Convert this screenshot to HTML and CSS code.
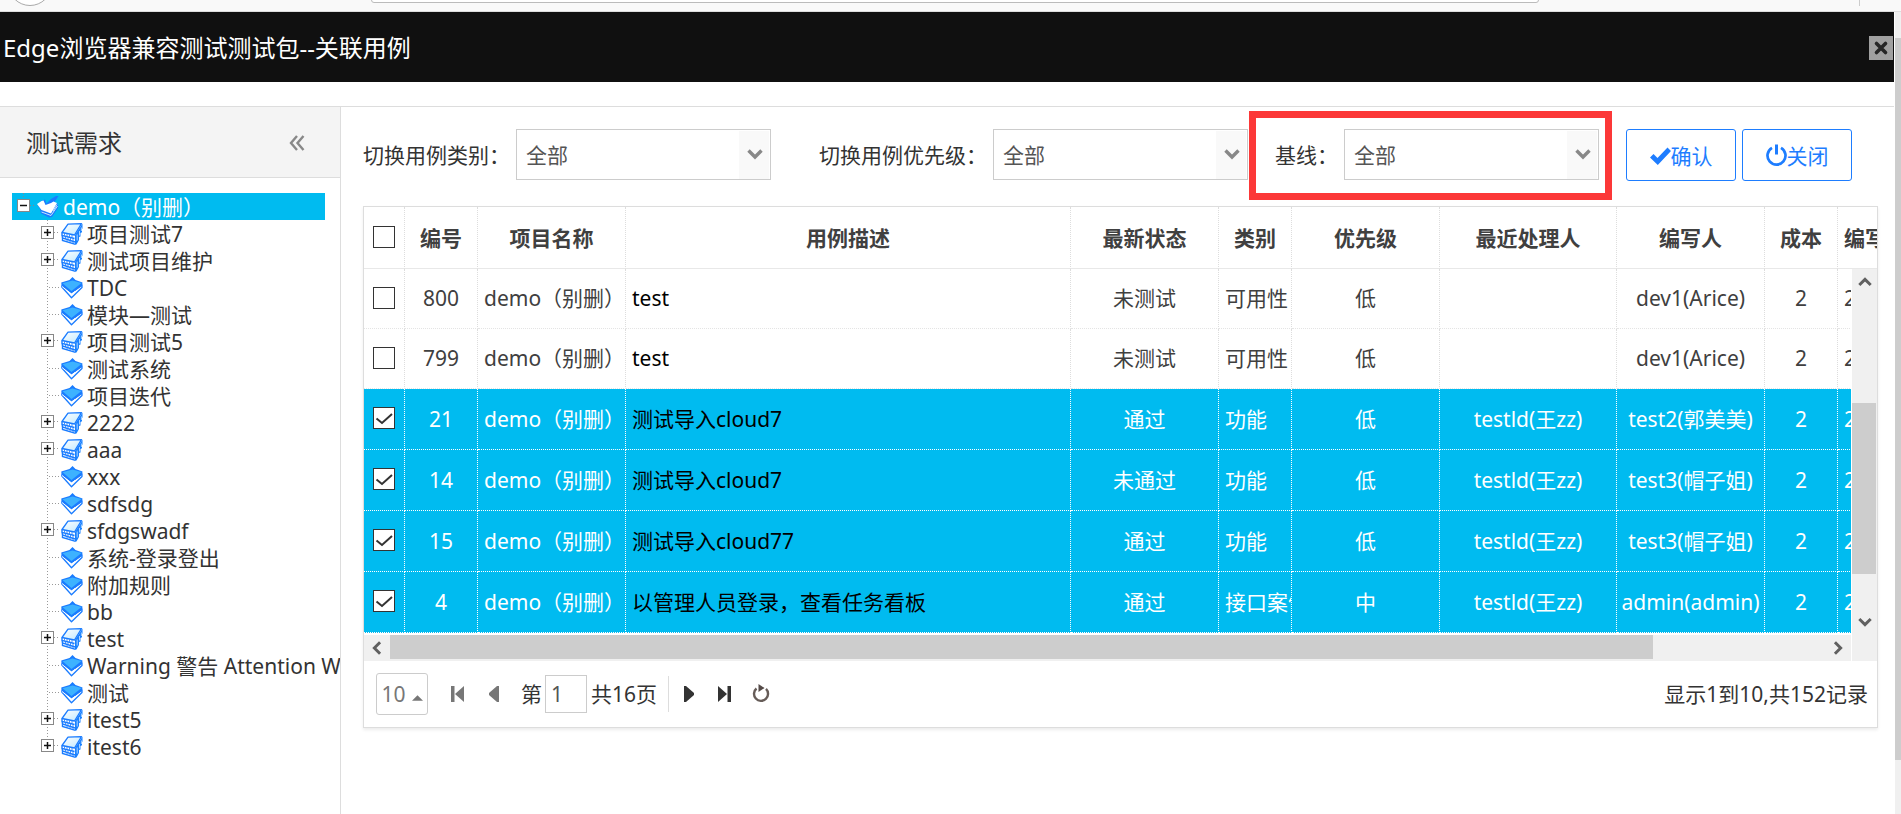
FILE: index.html
```html
<!DOCTYPE html>
<html lang="zh-CN">
<head>
<meta charset="utf-8">
<title>关联用例</title>
<link rel="stylesheet" href="styles.css">
</head>
<body>
<svg class="defs" aria-hidden="true">
  <defs>
    <linearGradient id="face" x1="0" y1="0" x2="1" y2="1"><stop offset="0" stop-color="#fff"/><stop offset="1" stop-color="#bfe9ff"/></linearGradient>
    <symbol id="stack" viewBox="0 0 22 22">
      <path d="M1 9.500 7 1.500 21 .5V7L15 21.500 1.500 17z" fill="#fff"/>
      <path d="M21.500.5 14 12v9.500h1.500L18 17v-3l1.500-.5V10l1.500-.8V6l.5-.5z" fill="#1a82ff"/>
      <path d="M16.200 11.500v6M18.500 8v4.500M20.400 4.500V8" stroke="#cfe8ff" stroke-width=".8"/>
      <path d="M1 9.500 7 1.200 20.500.7 13.500 12z" fill="url(#face)" stroke="#1a7cff" stroke-width="1.300" stroke-linejoin="round"/>
      <path d="M1 9.500v3L13.500 15.500M1 12.500l.5 2.500 12.500 4M1.500 15.500v2L14.500 21.300" fill="none" stroke="#1a7cff" stroke-width="1.400"/>
      <path d="M3.500 10.200v2.500M6 10.800v2.500M8.500 11.400v2.500M11 12v2.500M4.500 13.500v2.500M7 14.200v2.500M9.500 15v2.500M12 15.500V18M6 16.700v2M9 17.600v2M12 18.500v2" stroke="#1a7cff" stroke-width=".8"/>
    </symbol>
    <symbol id="open" viewBox="0 0 22 22">
      <path d="M4 5 8 3.500l1.500 4L14 3l5-3h2.500L17.500 6l3.500 2v4l-6 9-3 .5L4 17.500 3 13 .5 9z" fill="#1a7cff"/>
      <path d="M0 8 4.500 5l2-.5L8.500 9 14 7l2.500-1.500L20 7l-6 10.500L4.500 14z" fill="#fff"/>
      <path d="M4.500 16 14 19.500 20.500 10M16 15l4-6.500" fill="none" stroke="#d9eeff" stroke-width=".9"/>
    </symbol>
    <symbol id="leaf" viewBox="0 0 22 22">
      <path d="M1 9 10.500 15.500 21 8v2.500L10.500 20.800.8 10z" fill="#fff" stroke="#1a7cff" stroke-width="1.300" stroke-linejoin="round"/>
      <path d="M.3 5.500 8.500 3 11.500 0l3 3 7 2.500-.5 3.500L10.500 16.500.5 9z" fill="#1a7cff"/>
      <path d="M1.500 6.200 11.500 3.500 20.500 6 10.500 14z" fill="#3db2ff"/>
      <path d="M1 9.500 10.500 17 14 14.500" fill="none" stroke="#fff" stroke-width="1"/>
    </symbol>
    <symbol id="plus" viewBox="0 0 24 27">
      <path d="M11.500 0v27" stroke="#999" stroke-dasharray="1 2"/><path d="M18 12.500h6" stroke="#999" stroke-dasharray="1 2"/>
      <rect x="5.500" y="6.500" width="12" height="12" fill="#fff" stroke="#888"/>
      <path d="M8 12.500h7M11.500 9v7" stroke="#111" stroke-width="1.500"/>
    </symbol>
    <symbol id="plus-end" viewBox="0 0 24 27">
      <path d="M11.500 0v6" stroke="#999" stroke-dasharray="1 2"/><path d="M18 12.500h6" stroke="#999" stroke-dasharray="1 2"/>
      <rect x="5.500" y="6.500" width="12" height="12" fill="#fff" stroke="#888"/>
      <path d="M8 12.500h7M11.500 9v7" stroke="#111" stroke-width="1.500"/>
    </symbol>
    <symbol id="minus" viewBox="0 0 24 27">
      <path d="M11.500 0v6" stroke="#888" stroke-dasharray="1 2"/><path d="M18 12.500h6" stroke="#888" stroke-dasharray="1 2"/>
      <rect x="5.500" y="6.500" width="12" height="12" fill="#fff" stroke="#888"/>
      <path d="M8 12.500h7" stroke="#111" stroke-width="1.500"/>
    </symbol>
    <symbol id="join" viewBox="0 0 24 27"><path d="M11.500 0v27M13 13.500h11" stroke="#999" stroke-dasharray="1 2"/></symbol>
    <symbol id="chev" viewBox="0 0 16 16"><path d="M1.500 4.500 8 11l6.500-6.500" fill="none" stroke="currentColor" stroke-width="3.400"/></symbol>
  </defs>
</svg>

<div class="chrome"><span class="chrome-circle"></span><span class="chrome-url"></span><span class="chrome-sep"></span></div>

<div class="page">
  <div class="window">
    <header class="titlebar">
      <h1>Edge浏览器兼容测试测试包--关联用例</h1>
      <button class="close" aria-label="关闭窗口"><svg viewBox="0 0 24 24"><path d="M7.500 7.500l9 9M16.500 7.500l-9 9" stroke="#262626" stroke-width="3.600" stroke-linecap="round"/></svg></button>
    </header>
    <div class="layout">
      <aside class="sidebar">
        <div class="side-head">
          <h2>测试需求</h2>
          <button class="collapse" aria-label="折叠"><svg viewBox="0 0 16 16"><path d="M8 1 2 8l6 7M14.500 1l-6 7 6 7" fill="none" stroke="#888" stroke-width="2.400"/></svg></button>
        </div>
        <ul class="tree">
          <li>
            <div class="node selected"><svg class="hit"><use href="#minus"/></svg><svg class="ico"><use href="#open"/></svg><span>demo（别删）</span></div>
            <ul>
              <li class="node"><svg class="hit"><use href="#plus"/></svg><svg class="ico"><use href="#stack"/></svg><span>项目测试7</span></li>
              <li class="node"><svg class="hit"><use href="#plus"/></svg><svg class="ico"><use href="#stack"/></svg><span>测试项目维护</span></li>
              <li class="node"><svg class="hit"><use href="#join"/></svg><svg class="ico"><use href="#leaf"/></svg><span>TDC</span></li>
              <li class="node"><svg class="hit"><use href="#join"/></svg><svg class="ico"><use href="#leaf"/></svg><span>模块—测试</span></li>
              <li class="node"><svg class="hit"><use href="#plus"/></svg><svg class="ico"><use href="#stack"/></svg><span>项目测试5</span></li>
              <li class="node"><svg class="hit"><use href="#join"/></svg><svg class="ico"><use href="#leaf"/></svg><span>测试系统</span></li>
              <li class="node"><svg class="hit"><use href="#join"/></svg><svg class="ico"><use href="#leaf"/></svg><span>项目迭代</span></li>
              <li class="node"><svg class="hit"><use href="#plus"/></svg><svg class="ico"><use href="#stack"/></svg><span>2222</span></li>
              <li class="node"><svg class="hit"><use href="#plus"/></svg><svg class="ico"><use href="#stack"/></svg><span>aaa</span></li>
              <li class="node"><svg class="hit"><use href="#join"/></svg><svg class="ico"><use href="#leaf"/></svg><span>xxx</span></li>
              <li class="node"><svg class="hit"><use href="#join"/></svg><svg class="ico"><use href="#leaf"/></svg><span>sdfsdg</span></li>
              <li class="node"><svg class="hit"><use href="#plus"/></svg><svg class="ico"><use href="#stack"/></svg><span>sfdgswadf</span></li>
              <li class="node"><svg class="hit"><use href="#join"/></svg><svg class="ico"><use href="#leaf"/></svg><span>系统-登录登出</span></li>
              <li class="node"><svg class="hit"><use href="#join"/></svg><svg class="ico"><use href="#leaf"/></svg><span>附加规则</span></li>
              <li class="node"><svg class="hit"><use href="#join"/></svg><svg class="ico"><use href="#leaf"/></svg><span>bb</span></li>
              <li class="node"><svg class="hit"><use href="#plus"/></svg><svg class="ico"><use href="#stack"/></svg><span>test</span></li>
              <li class="node"><svg class="hit"><use href="#join"/></svg><svg class="ico"><use href="#leaf"/></svg><span>Warning 警告 Attention W</span></li>
              <li class="node"><svg class="hit"><use href="#join"/></svg><svg class="ico"><use href="#leaf"/></svg><span>测试</span></li>
              <li class="node"><svg class="hit"><use href="#plus"/></svg><svg class="ico"><use href="#stack"/></svg><span>itest5</span></li>
              <li class="node"><svg class="hit"><use href="#plus-end"/></svg><svg class="ico"><use href="#stack"/></svg><span>itest6</span></li>
            </ul>
          </li>
        </ul>
      </aside>

      <main class="content">
        <div class="filters">
          <div class="field field-type"><label for="type">切换用例类别：</label><div class="combo"><select id="type"><option>全部</option></select><svg><use href="#chev"/></svg></div></div>
          <div class="field field-level"><label for="level">切换用例优先级：</label><div class="combo"><select id="level"><option>全部</option></select><svg><use href="#chev"/></svg></div></div>
          <div class="field field-base"><label for="base">基线：</label><div class="combo"><select id="base"><option>全部</option></select><svg><use href="#chev"/></svg></div></div>
          <div class="actions">
            <button class="btn"><svg viewBox="0 0 21 21"><path d="M0 11.500 3.500 8l4 4L17.500 1.500 21 5 7.800 19z" fill="currentColor"/></svg>确认</button>
            <button class="btn"><svg viewBox="0 0 21 21"><path d="M6 1.800A9 9 0 1 0 15 1.800" fill="none" stroke="currentColor" stroke-width="2.700"/><path d="M10.500-1.500v10" stroke="currentColor" stroke-width="3"/></svg>关闭</button>
          </div>
        </div>

        <section class="grid">
          <div class="grid-view">
            <table>
              <colgroup><col class="w-check"><col class="w-s"><col class="w-m"><col><col class="w-m"><col class="w-s"><col class="w-m"><col class="w-l"><col class="w-m"><col class="w-s"><col class="w-m"></colgroup>
              <thead>
                <tr><th class="pick"><input type="checkbox" aria-label="全选"></th><th>编号</th><th>项目名称</th><th>用例描述</th><th>最新状态</th><th>类别</th><th>优先级</th><th>最近处理人</th><th>编写人</th><th>成本</th><th class="left">编写日期</th></tr>
              </thead>
              <tbody>
                <tr><td class="pick"><input type="checkbox" aria-label="800"></td><td>800</td><td class="left">demo（别删）</td><td class="desc">test</td><td>未测试</td><td class="left">可用性</td><td>低</td><td></td><td>dev1(Arice)</td><td>2</td><td class="left">2019</td></tr>
                <tr><td class="pick"><input type="checkbox" aria-label="799"></td><td>799</td><td class="left">demo（别删）</td><td class="desc">test</td><td>未测试</td><td class="left">可用性</td><td>低</td><td></td><td>dev1(Arice)</td><td>2</td><td class="left">2019</td></tr>
                <tr class="on"><td class="pick"><input type="checkbox" checked aria-label="21"></td><td>21</td><td class="left">demo（别删）</td><td class="desc">测试导入cloud7</td><td>通过</td><td class="left">功能</td><td>低</td><td>testld(王zz)</td><td>test2(郭美美)</td><td>2</td><td class="left">2019</td></tr>
                <tr class="on"><td class="pick"><input type="checkbox" checked aria-label="14"></td><td>14</td><td class="left">demo（别删）</td><td class="desc">测试导入cloud7</td><td>未通过</td><td class="left">功能</td><td>低</td><td>testld(王zz)</td><td>test3(帽子姐)</td><td>2</td><td class="left">2019</td></tr>
                <tr class="on"><td class="pick"><input type="checkbox" checked aria-label="15"></td><td>15</td><td class="left">demo（别删）</td><td class="desc">测试导入cloud77</td><td>通过</td><td class="left">功能</td><td>低</td><td>testld(王zz)</td><td>test3(帽子姐)</td><td>2</td><td class="left">2019</td></tr>
                <tr class="on"><td class="pick"><input type="checkbox" checked aria-label="4"></td><td>4</td><td class="left">demo（别删）</td><td class="desc">以管理人员登录，查看任务看板</td><td>通过</td><td class="left">接口案例</td><td>中</td><td>testld(王zz)</td><td>admin(admin)</td><td>2</td><td class="left">2019</td></tr>
              </tbody>
            </table>
            <div class="hscroll"><svg class="arrow to-left"><use href="#chev"/></svg><div class="htrack"><div class="hthumb"></div></div><svg class="arrow to-right"><use href="#chev"/></svg></div>
            <div class="vscroll"><svg class="arrow to-up"><use href="#chev"/></svg><div class="vtrack"><div class="vthumb"></div></div><svg class="arrow"><use href="#chev"/></svg></div>
          </div>
          <footer class="pager">
            <button class="size">10<svg viewBox="0 0 12 6"><path d="M0 6 6 0l6 6z" fill="#777"/></svg></button>
            <button class="nav dim" aria-label="首页"><svg viewBox="0 0 16 16"><path d="M1 0h3.500v16H1zM14 0v16L5 8z" fill="currentColor"/></svg></button>
            <button class="nav dim" aria-label="上一页"><svg viewBox="0 0 16 16"><path d="M13 0v16h-2L3 9V7l8-7z" fill="currentColor"/></svg></button>
            <div class="goto"><label for="pg">第</label><input id="pg" type="text" value="1"><span>共16页</span></div>
            <button class="nav" aria-label="下一页"><svg viewBox="0 0 16 16"><path d="M3 0v16h2l8-7V7L5 0z" fill="currentColor"/></svg></button>
            <button class="nav" aria-label="末页"><svg viewBox="0 0 16 16"><path d="M14 0h-3.500v16H14zM1 0v16l9-8z" fill="currentColor"/></svg></button>
            <button class="nav" aria-label="刷新"><svg viewBox="0 0 16 16"><path d="M3.500 2.500a7 7 0 1 0 9.500.4" fill="none" stroke="#665c58" stroke-width="2.400"/><path d="M5.500-2v8l6-4z" fill="#554b48"/></svg></button>
            <span class="total">显示1到10,共152记录</span>
          </footer>
        </section>
      </main>
    </div>
  </div>
  <div class="page-scroll"><div class="page-thumb"></div></div>
</div>
</body>
</html>
```

FILE: styles.css
```css
* { box-sizing: border-box; }

body {
  margin: 0;
  height: 100vh;
  display: flex;
  flex-direction: column;
  overflow: hidden;
  background: #fff;
  color: #333;
  font: 21px/27px "Noto Sans", "Noto Sans CJK SC", sans-serif;
}

h1, h2 { margin: 0; font-weight: 400; }
ul { margin: 0; padding: 0; list-style: none; }
button, input, select { font: inherit; color: inherit; }
button { padding: 0; border: 0; background: none; }
.defs { position: absolute; width: 0; height: 0; }

/* browser toolbar edge */
.chrome {
  position: relative;
  flex: none;
  height: 12px;
  overflow: hidden;
  background: #f9f9f9;
  border-bottom: 1px solid #ddd;
}
.chrome-circle {
  position: absolute;
  left: 8px;
  bottom: 5px;
  width: 44px;
  height: 44px;
  border: 1px solid #aaa;
  border-radius: 50%;
  background: #fff;
}
.chrome-url {
  position: absolute;
  left: 371px;
  right: 362px;
  bottom: 8px;
  height: 20px;
  border: 1px solid #bbb;
  border-radius: 3px;
  background: #fff;
}
.chrome-sep {
  position: absolute;
  right: 41px;
  top: 0;
  width: 1px;
  height: 6px;
  background: #ccc;
}

.page { flex: 1; min-height: 0; display: flex; }
.window { flex: 1; min-width: 0; display: flex; flex-direction: column; }
.page-scroll { flex: none; width: 7px; padding-top: 26px; background: #f0f0f0; border-left: 1px solid #fff; }
.page-thumb { height: 93%; background: #cdcdcd; }

.titlebar {
  flex: none;
  height: 70px;
  padding: 2px 1px 0 3px;
  display: flex;
  align-items: center;
  justify-content: space-between;
  background: #101010;
  color: #fff;
}
.titlebar h1 { font-size: 24px; line-height: 32px; }
.close { width: 24px; height: 24px; background: #a0a0a0; }
.close svg { display: block; width: 24px; height: 24px; }

.layout {
  flex: 1;
  min-height: 0;
  display: flex;
  margin-top: 24px;
  border-top: 1px solid #ddd;
}

.sidebar { flex: none; width: 341px; border-right: 1px solid #ddd; overflow: hidden; }
.side-head {
  height: 71px;
  padding: 2px 35px 0 26px;
  display: flex;
  align-items: center;
  justify-content: space-between;
  background: #f4f4f4;
  border-bottom: 1px solid #ddd;
}
.side-head h2 { font-size: 24px; line-height: 32px; }
.collapse, .collapse svg { display: block; width: 16px; height: 16px; }

.tree { padding: 15px 15px 0 12px; }
.tree ul { padding-left: 24px; }
.node { display: flex; height: 27px; line-height: 29px; white-space: nowrap; }
.node span { padding-left: 3px; }
.node .hit { flex: none; width: 24px; height: 27px; }
.node .ico { flex: none; width: 22px; height: 22px; margin: 3px 1px 0; }
.selected { background: #00bbf0; color: #fff; }

.content { flex: 1; min-width: 0; padding: 22px 16px 0 22px; }

.filters { display: flex; height: 52px; margin-bottom: 25px; }
.field { position: relative; display: flex; height: 51px; }
.field label { line-height: 53px; white-space: nowrap; }
.field-type { margin-right: 48px; }
.field-level, .field-base { margin-right: 27px; }
.field-type label { width: 153px; }
.field-level label { width: 174px; }
.field-base label { width: 69px; }
.field-base::after {
  content: "";
  position: absolute;
  inset: -18px -13px -20px -26px;
  border: 7px solid #fc3838;
  pointer-events: none;
}
.combo { position: relative; width: 255px; }
.combo select {
  appearance: none;
  width: 100%;
  height: 100%;
  padding: 2px 40px 0 9px;
  border: 1px solid #ccc;
  border-radius: 0;
  background: linear-gradient(#f9f9f9, #f9f9f9) right 1px top 1px / 30px 100% no-repeat #fff;
  color: #555;
}
.combo svg {
  position: absolute;
  right: 8px;
  top: 17px;
  width: 16px;
  height: 16px;
  color: #888;
  pointer-events: none;
}
.actions { display: flex; gap: 6px; }
.btn {
  width: 110px;
  height: 52px;
  padding-top: 2px;
  display: flex;
  align-items: center;
  justify-content: center;
  border: 1px solid #1e7dff;
  border-radius: 3px;
  background: #fff;
  color: #1e7dff;
}
.btn svg { width: 21px; height: 21px; overflow: visible; }

.grid { border: 1px solid #ddd; box-shadow: 0 2px 3px rgba(0, 0, 0, .08); }
.grid-view { position: relative; overflow: hidden; }

table {
  width: calc(100% + 109px);
  table-layout: fixed;
  border-collapse: separate;
  border-spacing: 0;
}
.w-check { width: 41px; }
.w-s { width: 73px; }
.w-m { width: 148px; }
.w-l { width: 177px; }
th, td {
  height: 60px;
  padding: 0;
  overflow: hidden;
  white-space: nowrap;
  text-align: center;
  border-right: 1px dotted #ddd;
  border-bottom: 1px dotted #e4e4e4;
}
th { height: 62px; padding-top: 2px; color: #404040; border-bottom: 1px solid #e8e8e8; }
td { color: #404040; }
.left { padding-left: 6px; text-align: left; }
.desc { padding-left: 6px; text-align: left; color: #000; }
.pick { padding: 0 1px 2px 0; }
.on td { height: 61px; background: #00bbf0; color: #fff; border-color: #fff; }
.on .desc { color: #000; }

input[type="checkbox"] {
  appearance: none;
  display: block;
  width: 22px;
  height: 22px;
  margin: 0 auto;
  border: 1px solid #333;
  background: #fff;
}
input[type="checkbox"]:checked {
  background: #fff url("data:image/svg+xml,%3Csvg xmlns='http://www.w3.org/2000/svg' viewBox='0 0 20 20'%3E%3Cpath d='M2.500 10.500 8 15 18 6' fill='none' stroke='%23333' stroke-width='2'/%3E%3C/svg%3E") center / 20px 20px no-repeat;
}

/* grid scrollbars */
.arrow { flex: none; width: 14px; height: 14px; margin: 6px; color: #606060; }
.to-left { transform: rotate(90deg); }
.to-right { transform: rotate(-90deg); }
.to-up { transform: rotate(180deg); }
.hscroll { display: flex; height: 26px; margin: 2px 26px 0 0; background: #f0f0f0; }
.htrack { flex: 1; }
.hthumb { width: 88%; height: 24px; background: #cdcdcd; }
.vscroll {
  position: absolute;
  top: 62px;
  right: 0;
  bottom: 0;
  width: 26px;
  padding-bottom: 26px;
  display: flex;
  flex-direction: column;
  background: #f0f0f0;
  border-left: 1px solid #fff;
}
.vtrack { flex: 1; display: flex; flex-direction: column; justify-content: flex-end; padding-bottom: 35px; }
.vthumb { width: 24px; height: 171px; background: #cdcdcd; }

.pager { display: flex; align-items: center; height: 66px; padding: 0 9px 0 12px; }
.size {
  width: 52px;
  height: 42px;
  margin-right: 12px;
  display: flex;
  align-items: center;
  justify-content: center;
  gap: 6px;
  border: 1px solid #ccc;
  border-radius: 3px;
  color: #777;
}
.size svg { width: 11px; height: 6px; margin-top: 8px; }
.nav { width: 36px; height: 36px; display: flex; align-items: center; justify-content: center; }
.nav svg { width: 16px; height: 16px; overflow: visible; }
.dim { color: #777; }
.goto {
  display: flex;
  align-items: center;
  height: 36px;
  margin: 0 2px 0 9px;
  padding-right: 11px;
  border-right: 1px solid #ddd;
}
.goto input {
  width: 42px;
  height: 38px;
  margin: 0 4px 0 3px;
  padding: 0 5px;
  border: 1px solid #ccc;
  color: #555;
}
.total { margin-left: auto; }
```
